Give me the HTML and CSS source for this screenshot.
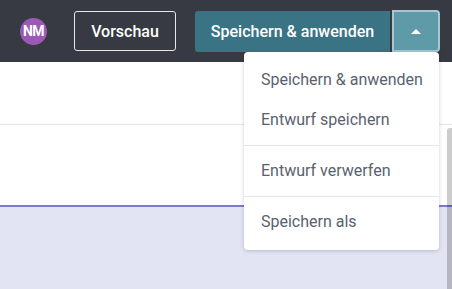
FILE: index.html
```html
<!DOCTYPE html>
<html lang="de">
<head>
  <meta charset="UTF-8">
  <title>Editor</title>
  <link rel="stylesheet" href="styles.css">
</head>
<body>
  <div id="topbar">
    <div class="avatar">NM</div>
    <button class="btn-outline">Vorschau</button>
    <div class="split">
      <button class="btn-save">Speichern &amp; anwenden</button>
      <div class="toggle-wrap">
        <button class="btn-toggle"><span class="caret"></span></button>
        <div class="menu">
          <div class="menu-item">Speichern &amp; anwenden</div>
          <div class="menu-item">Entwurf speichern</div>
          <div class="menu-sep"></div>
          <div class="menu-item">Entwurf verwerfen</div>
          <div class="menu-sep"></div>
          <div class="menu-item">Speichern als</div>
        </div>
      </div>
    </div>
  </div>

  <div id="toolbar"></div>
  <div id="content">
    <div class="scrollbar"></div>
  </div>
  <div id="canvas"></div>
</body>
</html>
```

FILE: styles.css
```css
body {
  margin: 0;
  font-family: Roboto, "Liberation Sans", sans-serif;
  background-color: #e3e4f3;
  overflow: hidden;
}
#topbar {
  height: 62px;
  background-color: #373a42;
  display: flex;
  align-items: center;
  padding-left: 20px;
}
.avatar {
  width: 27px;
  height: 27px;
  border-radius: 50%;
  background-color: #9b59b6;
  color: #fff;
  font-size: 14px;
  font-weight: 700;
  display: flex;
  align-items: center;
  justify-content: center;
  letter-spacing: -0.5px;
}
button {
  font-family: inherit;
  font-size: 16px;
  font-weight: 500;
  color: #fff;
  cursor: pointer;
}
.btn-outline {
  margin-left: 27px;
  width: 102px;
  height: 40px;
  background: transparent;
  border: 1px solid #e8e8e8;
  border-radius: 3px;
}
.split {
  margin-left: 19px;
  display: flex;
  align-items: center;
}
.btn-save {
  width: 195px;
  height: 41px;
  background-color: #3a7484;
  border: none;
  border-radius: 3px 0 0 3px;
}
.toggle-wrap {
  position: relative;
  margin-left: 2px;
}
.btn-toggle {
  width: 48px;
  height: 42px;
  background-color: #5f9aa8;
  border: 2px solid #a9c7cf;
  border-radius: 0 4px 4px 0;
  display: flex;
  align-items: center;
  justify-content: center;
  padding: 0;
}
.caret {
  width: 0;
  height: 0;
  border-left: 5px solid transparent;
  border-right: 5px solid transparent;
  border-bottom: 5px solid #fff;
}
.menu {
  position: absolute;
  top: 42px;
  right: 1px;
  width: 195px;
  background: #fff;
  border-radius: 4px;
  padding: 8px 0;
  box-shadow: 0 1px 4px rgba(0, 0, 0, 0.18);
  z-index: 10;
}
.menu-item {
  height: 40px;
  line-height: 40px;
  padding-left: 17px;
  font-size: 16px;
  color: #59626e;
}
.menu-sep {
  height: 1px;
  margin: 5px 0;
  background-color: #e5e6e8;
}
#toolbar {
  height: 62px;
  background: #fff;
  border-bottom: 1px solid #e6e6e6;
}
#content {
  position: relative;
  height: 80px;
  background: #fff;
  border-bottom: 2px solid #7b7bcb;
}
.scrollbar {
  position: absolute;
  right: 0;
  top: 3px;
  width: 5px;
  height: 161px;
  background: rgba(0, 0, 0, 0.2);
  border-radius: 3px 0 0 0;
}
#canvas {
  height: 82px;
}
```
